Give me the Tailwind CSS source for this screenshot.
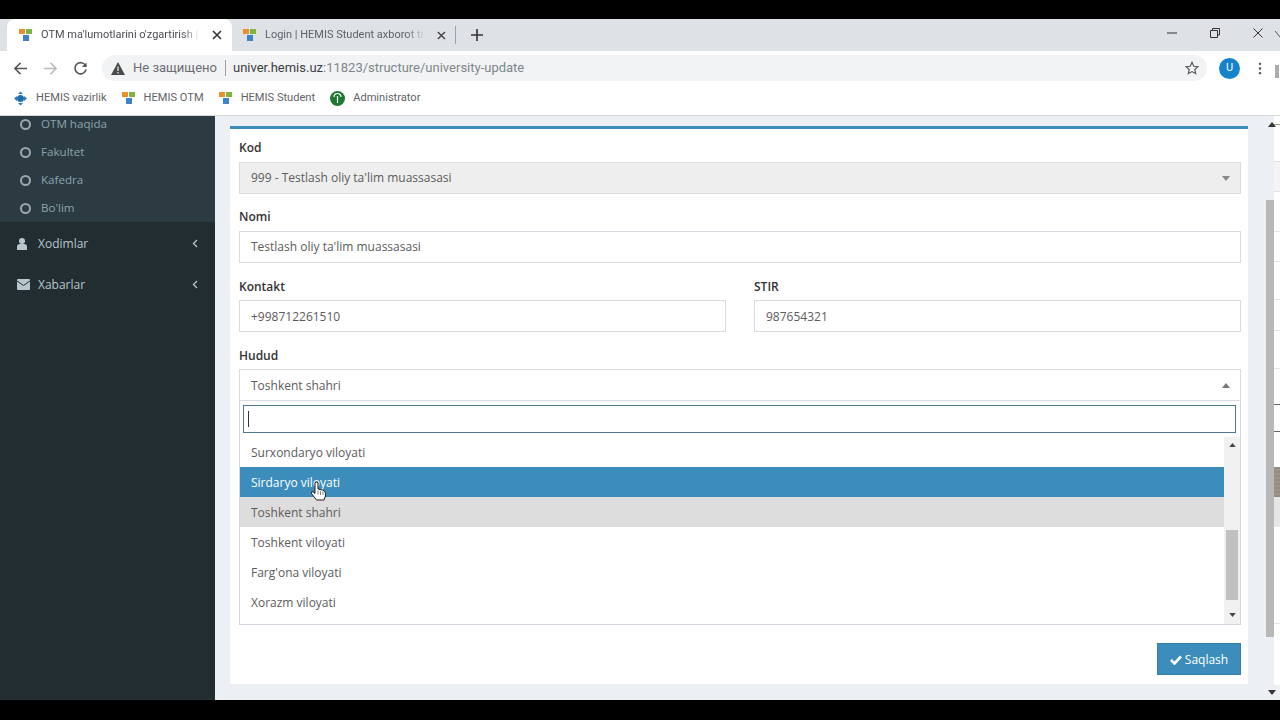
<!DOCTYPE html>
<html><head><meta charset="utf-8"><script src="https://cdn.jsdelivr.net/npm/@tailwindcss/browser@4"></script></head>
<body class="bg-black">
<div class="relative w-[1280px] h-[720px] flex flex-col overflow-hidden bg-black font-['Open_Sans','Noto_Sans',sans-serif]">
  <div class="h-[19px] shrink-0 bg-black"></div>
  <!-- tabs -->
  <div class="h-[32px] shrink-0 bg-[#dee1e6] flex items-end relative font-['Roboto',sans-serif] text-[11px]">
    <div class="w-[7px]"></div>
    <div class="w-[225px] h-[32px] bg-white rounded-t-lg flex items-center pl-[12px] pr-[10px] text-[#4a4d52]">
      <svg class="w-[14px] h-[14px] shrink-0" viewBox="0 0 14 14"><rect x="0" y="1" width="6" height="5" fill="#e8902c"/><rect x="7" y="1" width="6" height="5" fill="#7cb342"/><rect x="4" y="7" width="6" height="6" fill="#3f83c4"/></svg>
      <span class="ml-[8px] whitespace-nowrap w-[160px] [mask-image:linear-gradient(to_right,#000_88%,transparent)]">OTM ma'lumotlarini o'zgartirish |</span>
      <svg class="w-[10px] h-[10px] ml-auto" viewBox="0 0 10 10"><path d="M1 1l8 8M9 1l-8 8" stroke="#333" stroke-width="1.600"/></svg>
    </div>
    <div class="w-[224px] h-[32px] flex items-center pl-[11px] text-[#5f6368] relative">
      <svg class="w-[14px] h-[14px] shrink-0" viewBox="0 0 14 14"><rect x="0" y="1" width="6" height="5" fill="#e8902c"/><rect x="7" y="1" width="6" height="5" fill="#7cb342"/><rect x="4" y="7" width="6" height="6" fill="#3f83c4"/></svg>
      <span class="ml-[8px] whitespace-nowrap w-[163px] [mask-image:linear-gradient(to_right,#000_88%,transparent)]">Login | HEMIS Student axborot ti</span>
      <svg class="w-[9px] h-[9px] ml-[12px]" viewBox="0 0 10 10"><path d="M1 1l8 8M9 1l-8 8" stroke="#444" stroke-width="1.600"/></svg>
      <div class="ml-[9px] w-px h-[18px] bg-[#9aa0a6]"></div>
    </div>
    <div class="h-[32px] flex items-center ml-[15px]">
      <svg class="w-[12px] h-[12px]" viewBox="0 0 12 12"><path d="M6 0v12M0 6h12" stroke="#333" stroke-width="1.600"/></svg>
    </div>
    <div class="ml-auto h-[32px] flex items-center pr-[17px] gap-[33px] pb-[5px]">
      <svg class="w-[10px] h-[10px]" viewBox="0 0 10 10"><path d="M0 5h10" stroke="#333" stroke-width="1"/></svg>
      <svg class="w-[10px] h-[10px]" viewBox="0 0 10 10"><path d="M2.500 2.500V.5h7v6.500H7.500M.5 2.500h7v7h-7z" stroke="#333" fill="none"/></svg>
      <svg class="w-[10px] h-[10px]" viewBox="0 0 10 10"><path d="M.5 .5l9 9M9.500 .5l-9 9" stroke="#333" stroke-width="1"/></svg>
    </div>
  </div>
  <!-- address bar -->
  <div class="h-[32px] shrink-0 bg-white flex items-center pt-[2px] font-['Roboto',sans-serif] text-[13px]">
    <div class="w-[102px] flex items-center pl-[13px] gap-[15px] shrink-0">
      <svg class="w-[15px] h-[15px]" viewBox="0 0 16 16"><path d="M15 8H2M8 2L2 8l6 6" stroke="#555" stroke-width="1.600" fill="none"/></svg>
      <svg class="w-[15px] h-[15px]" viewBox="0 0 16 16"><path d="M1 8h13M8 2l6 6-6 6" stroke="#bbb" stroke-width="1.600" fill="none"/></svg>
      <svg class="w-[15px] h-[15px]" viewBox="0 0 16 16"><path d="M13.500 5A6 6 0 1 0 14 9" stroke="#555" stroke-width="1.700" fill="none"/><path d="M14.500 1.500v5h-5z" fill="#555"/></svg>
    </div>
    <div class="w-[1105px] h-[26px] bg-[#f1f3f4] rounded-full flex items-center pl-[9px] pr-[8px] shrink-0">
      <svg class="w-[14px] h-[13px]" viewBox="0 0 14 13"><path d="M7 0l7 13H0z" fill="#4a4a4a"/><path d="M7 4.500v4.500M7 10v1.500" stroke="#f1f3f4" stroke-width="1.200"/></svg>
      <span class="ml-[8px] text-[#6b6f73] whitespace-nowrap">Не защищено</span>
      <div class="w-px h-[16px] bg-[#9aa0a6] ml-[8px]"></div>
      <span class="ml-[7px] text-[#3c4043] whitespace-nowrap">univer.hemis.uz<span class="text-[#80868b]">:11823/structure/university-update</span></span>
      <svg class="w-[14px] h-[14px] ml-auto" viewBox="0 0 16 16"><path d="M8 1.500l2 4.500 4.800.5-3.600 3.200 1 4.800L8 12.100l-4.200 2.400 1-4.800L1.200 6.500l4.800-.5z" stroke="#555" stroke-width="1.300" fill="none"/></svg>
    </div>
    <div class="w-[21px] h-[21px] rounded-full bg-[#1583c9] text-white text-[11px] flex items-center justify-center ml-[12px] shrink-0">U</div>
    <svg class="w-[4px] h-[13px] ml-[18px] shrink-0" viewBox="0 0 4 14"><circle cx="2" cy="2" r="1.300" fill="#555"/><circle cx="2" cy="7" r="1.300" fill="#555"/><circle cx="2" cy="12" r="1.300" fill="#555"/></svg>
  </div>
  <!-- bookmarks -->
  <div class="h-[32px] shrink-0 bg-white flex items-center pb-[2px] font-['Roboto',sans-serif] text-[11.1px] text-[#5f6368] pl-[13px]">
    <svg class="w-[15px] h-[15px] shrink-0" viewBox="0 0 15 15"><circle cx="7.500" cy="7.500" r="3.500" fill="#1f6fa8"/><path d="M1 7.500L4 5v5zM14 7.500L11 5v5zM7.500 .5L10 3H5zM7.500 14.500L10 12H5z" fill="#2d7fb8"/></svg>
    <span class="ml-[8px]">HEMIS vazirlik</span>
    <svg class="w-[14px] h-[14px] ml-[15px] shrink-0" viewBox="0 0 14 14"><rect x="0" y="1" width="6" height="5" fill="#e8902c"/><rect x="7" y="1" width="6" height="5" fill="#7cb342"/><rect x="4" y="7" width="6" height="6" fill="#3f83c4"/></svg>
    <span class="ml-[8px]">HEMIS OTM</span>
    <svg class="w-[14px] h-[14px] ml-[15px] shrink-0" viewBox="0 0 14 14"><rect x="0" y="1" width="6" height="5" fill="#e8902c"/><rect x="7" y="1" width="6" height="5" fill="#7cb342"/><rect x="4" y="7" width="6" height="6" fill="#3f83c4"/></svg>
    <span class="ml-[8px]">HEMIS Student</span>
    <svg class="w-[15px] h-[15px] ml-[15px] shrink-0" viewBox="0 0 15 15"><circle cx="7.500" cy="7.500" r="7.500" fill="#1e7a32"/><path d="M7.500 12V5M4 6a3.500 3.500 0 0 1 7 0" stroke="#fff" stroke-width="1.200" fill="none"/></svg>
    <span class="ml-[8px]">Administrator</span>
  </div>
  <!-- page -->
  <div class="h-[585px] shrink-0 flex bg-[#ecf0f5] border-t border-[#d5d8dc]">
    <!-- sidebar -->
    <aside class="w-[215px] shrink-0 bg-[#222d32] flex flex-col text-[12px]">
      <div class="bg-[#2c3b41] h-[106px] shrink-0 overflow-hidden text-[#8aa4af] pl-[20px] flex flex-col text-[11.6px]">
        <div class="h-[28px] shrink-0 flex items-center gap-[10px] -mt-[6px]"><span class="w-[11px] h-[11px] rounded-full border-2 border-[#9aa8ae]"></span>OTM haqida</div>
        <div class="h-[28px] shrink-0 flex items-center gap-[10px]"><span class="w-[11px] h-[11px] rounded-full border-2 border-[#9aa8ae]"></span>Fakultet</div>
        <div class="h-[28px] shrink-0 flex items-center gap-[10px]"><span class="w-[11px] h-[11px] rounded-full border-2 border-[#9aa8ae]"></span>Kafedra</div>
        <div class="h-[28px] shrink-0 flex items-center gap-[10px]"><span class="w-[11px] h-[11px] rounded-full border-2 border-[#9aa8ae]"></span>Bo'lim</div>
      </div>
      <div class="h-[41px] flex items-center pt-[2px] pl-[17px] pr-[17px] text-[#b8c7ce]">
        <svg class="w-[10px] h-[12px]" viewBox="0 0 10 12"><circle cx="5" cy="3" r="3" fill="#b8c7ce"/><path d="M0 12V8.500Q0 6 3 6h4q3 0 3 2.500V12z" fill="#b8c7ce"/></svg>
        <span class="ml-[11px]">Xodimlar</span>
        <svg class="w-[6px] h-[9px] ml-auto" viewBox="0 0 6 9"><path d="M5 1L1.500 4.500 5 8" stroke="#b8c7ce" stroke-width="1.300" fill="none"/></svg>
      </div>
      <div class="h-[41px] flex items-center pt-[2px] pl-[17px] pr-[17px] text-[#b8c7ce]">
        <svg class="w-[13px] h-[11px]" viewBox="0 0 13 11"><rect width="13" height="11" rx="1" fill="#b8c7ce"/><path d="M0 2l6.500 4.500L13 2" stroke="#222d32" fill="none"/></svg>
        <span class="ml-[8px]">Xabarlar</span>
        <svg class="w-[6px] h-[9px] ml-auto" viewBox="0 0 6 9"><path d="M5 1L1.500 4.500 5 8" stroke="#b8c7ce" stroke-width="1.300" fill="none"/></svg>
      </div>
    </aside>
    <!-- content -->
    <main class="w-[1051px] shrink-0 pl-[15px] pt-[10px]">
      <div class="w-[1018px] h-[558px] bg-white border-t-[3px] border-[#3c8dbc] pl-[9px] pr-[7px] pt-[10px] text-[12px] text-[#5c5c5c]">
        <label class="block font-semibold text-[#333] h-[17px] leading-[17px]">Kod</label>
        <div class="mt-[6px] h-[32px] bg-[#eee] border border-[#d9dce2] flex items-center px-[11px]">999 - Testlash oliy ta'lim muassasasi<svg class="w-[8px] h-[5px] ml-auto mr-[-1px]" viewBox="0 0 8 5"><path d="M0 0h8L4 5z" fill="#888"/></svg></div>
        <label class="block font-semibold text-[#333] h-[17px] leading-[17px] mt-[14px]">Nomi</label>
        <div class="mt-[6px] h-[32px] border border-[#d9dce2] flex items-center px-[11px]">Testlash oliy ta'lim muassasasi</div>
        <div class="flex gap-[28px] mt-[15px]">
          <div class="w-[487px]">
            <label class="block font-semibold text-[#333] h-[17px] leading-[17px]">Kontakt</label>
            <div class="mt-[5px] h-[32px] pt-[1px] border border-[#d9dce2] flex items-center px-[11px]">+998712261510</div>
          </div>
          <div class="w-[487px]">
            <label class="block font-semibold text-[#333] h-[17px] leading-[17px]">STIR</label>
            <div class="mt-[5px] h-[32px] pt-[1px] border border-[#d9dce2] flex items-center px-[11px]">987654321</div>
          </div>
        </div>
        <label class="block font-semibold text-[#333] h-[17px] leading-[17px] mt-[15px]">Hudud</label>
        <div class="mt-[5px] h-[32px] pt-[1px] border border-[#d9dce2] flex items-center px-[11px]">Toshkent shahri<svg class="w-[8px] h-[5px] ml-auto mr-[-1px]" viewBox="0 0 8 5"><path d="M0 5h8L4 0z" fill="#777"/></svg></div>
        <div class="h-[224px] border border-t-0 border-[#d2d6de]">
          <div class="h-[36px] pl-[3px] pr-[4px] pt-[4px]"><div class="h-[28px] border border-[#4d7a8f] flex items-center pl-[4px]"><span class="w-px h-[16px] bg-[#333]"></span></div></div>
          <div class="flex h-[187px]">
            <div class="flex-1 flex flex-col">
              <div class="h-[30px] shrink-0 flex items-center pt-[1px] px-[11px]">Surxondaryo viloyati</div>
              <div class="h-[30px] shrink-0 flex items-center pt-[1px] px-[11px] bg-[#3c8dbc] text-white relative">Sirdaryo viloyati
                <svg class="absolute left-[70px] top-[14px] w-[17px] h-[20px]" viewBox="0 0 17 20"><path d="M5 1.800q1.500-1.600 3 0v6.200l4.500 1q3 .7 3 3.500v2.500l-1.500 4H6.500L1.500 12.500q-.8-2 1.500-1.800L5 12.500z" fill="#fff" stroke="#222" stroke-width="1"/><path d="M8 9.500v4M10.500 10v4M13 10.500v3.500" stroke="#555" stroke-width=".7"/></svg>
              </div>
              <div class="h-[30px] shrink-0 flex items-center pt-[1px] px-[11px] bg-[#ddd]">Toshkent shahri</div>
              <div class="h-[30px] shrink-0 flex items-center pt-[1px] px-[11px]">Toshkent viloyati</div>
              <div class="h-[30px] shrink-0 flex items-center pt-[1px] px-[11px]">Farg'ona viloyati</div>
              <div class="h-[30px] shrink-0 flex items-center pt-[1px] px-[11px]">Xorazm viloyati</div>
            </div>
            <div class="w-[16px] bg-[#f1f1f1] flex flex-col items-center">
              <svg class="w-[7px] h-[4px] mt-[6px]" viewBox="0 0 8 5"><path d="M0 5h8L4 0z" fill="#444"/></svg>
              <div class="w-[12px] h-[70px] bg-[#c1c1c1] mt-[83px]"></div>
              <svg class="w-[7px] h-[4px] mt-[13px]" viewBox="0 0 8 5"><path d="M0 0h8L4 5z" fill="#444"/></svg>
            </div>
          </div>
        </div>
        <div class="flex justify-end mt-[18px]">
          <div class="w-[84px] h-[32px] pt-[1px] bg-[#3c8dbc] border border-[#367fa9] text-white flex items-center justify-center gap-[3px]">
            <svg class="w-[12px] h-[10px]" viewBox="0 0 12 10"><path d="M1 5l3.500 3.500L11 1.500" stroke="#fff" stroke-width="2.600" fill="none"/></svg>Saqlash
          </div>
        </div>
      </div>
    </main>
    <!-- page scrollbar -->
    <div class="w-[8px] shrink-0 flex flex-col">
      <div class="h-[84px] shrink-0"></div>
      <div class="h-[437px] shrink-0 bg-[#b8b8b8]"></div>
    </div>
    <!-- the window peeking out on the right -->
    <div class="w-[6px] shrink-0 h-[569px] bg-white flex flex-col">
      <div class="h-[9px] shrink-0 border-b border-[#a8a58c]"></div>
      <div class="h-[37px] shrink-0 border-b border-[#e3e3e3]"></div>
      <div class="h-[30px] shrink-0 border-b border-[#e3e3e3] bg-[#f4f4f4]"></div>
      <div class="h-[40px] shrink-0 border-b border-[#e3e3e3]"></div>
      <div class="h-[30px] shrink-0 border-b border-[#e3e3e3]"></div>
      <div class="h-[38px] shrink-0 border-b border-[#e3e3e3]"></div>
      <div class="h-[31px] shrink-0 border-b border-[#e3e3e3]"></div>
      <div class="h-[38px] shrink-0 border-b border-[#e3e3e3]"></div>
      <div class="h-[36px] shrink-0 border-b border-[#666]"></div>
      <div class="h-[27px] shrink-0 border-b border-[#666]"></div>
      <div class="h-[35px] shrink-0"></div>
      <div class="h-[30px] shrink-0 bg-[repeating-linear-gradient(to_bottom,#8a8f8a_0px,#8a8f8a_2px,#a8907f_2px,#a8907f_4px)]"></div>
      <div class="h-[30px] shrink-0 bg-[#e6e6e6]"></div>
      <div class="h-[97px] shrink-0 border-b border-[#e3e3e3]"></div>
    </div>
  </div>
  <div class="flex-1 bg-black"></div>
  <!-- overlays: arrows of the scrollbar and slivers of the window behind -->
  <svg class="absolute left-[1268px] top-[122px] w-[8px] h-[5px]" viewBox="0 0 8 5"><path d="M0 5h8L4 0z" fill="#333"/></svg>
  <svg class="absolute left-[1268px] top-[690px] w-[8px] h-[5px]" viewBox="0 0 8 5"><path d="M0 0h8L4 5z" fill="#333"/></svg>
  <svg class="absolute left-[1275px] top-[31px] w-[5px] h-[6px]" viewBox="0 0 5 6"><path d="M0 0l5 6" stroke="#555"/></svg>
  <div class="absolute left-[1275px] top-[65px] w-[4px] h-[13px] bg-[#a9adb0]"></div>
</div>
</body></html>
